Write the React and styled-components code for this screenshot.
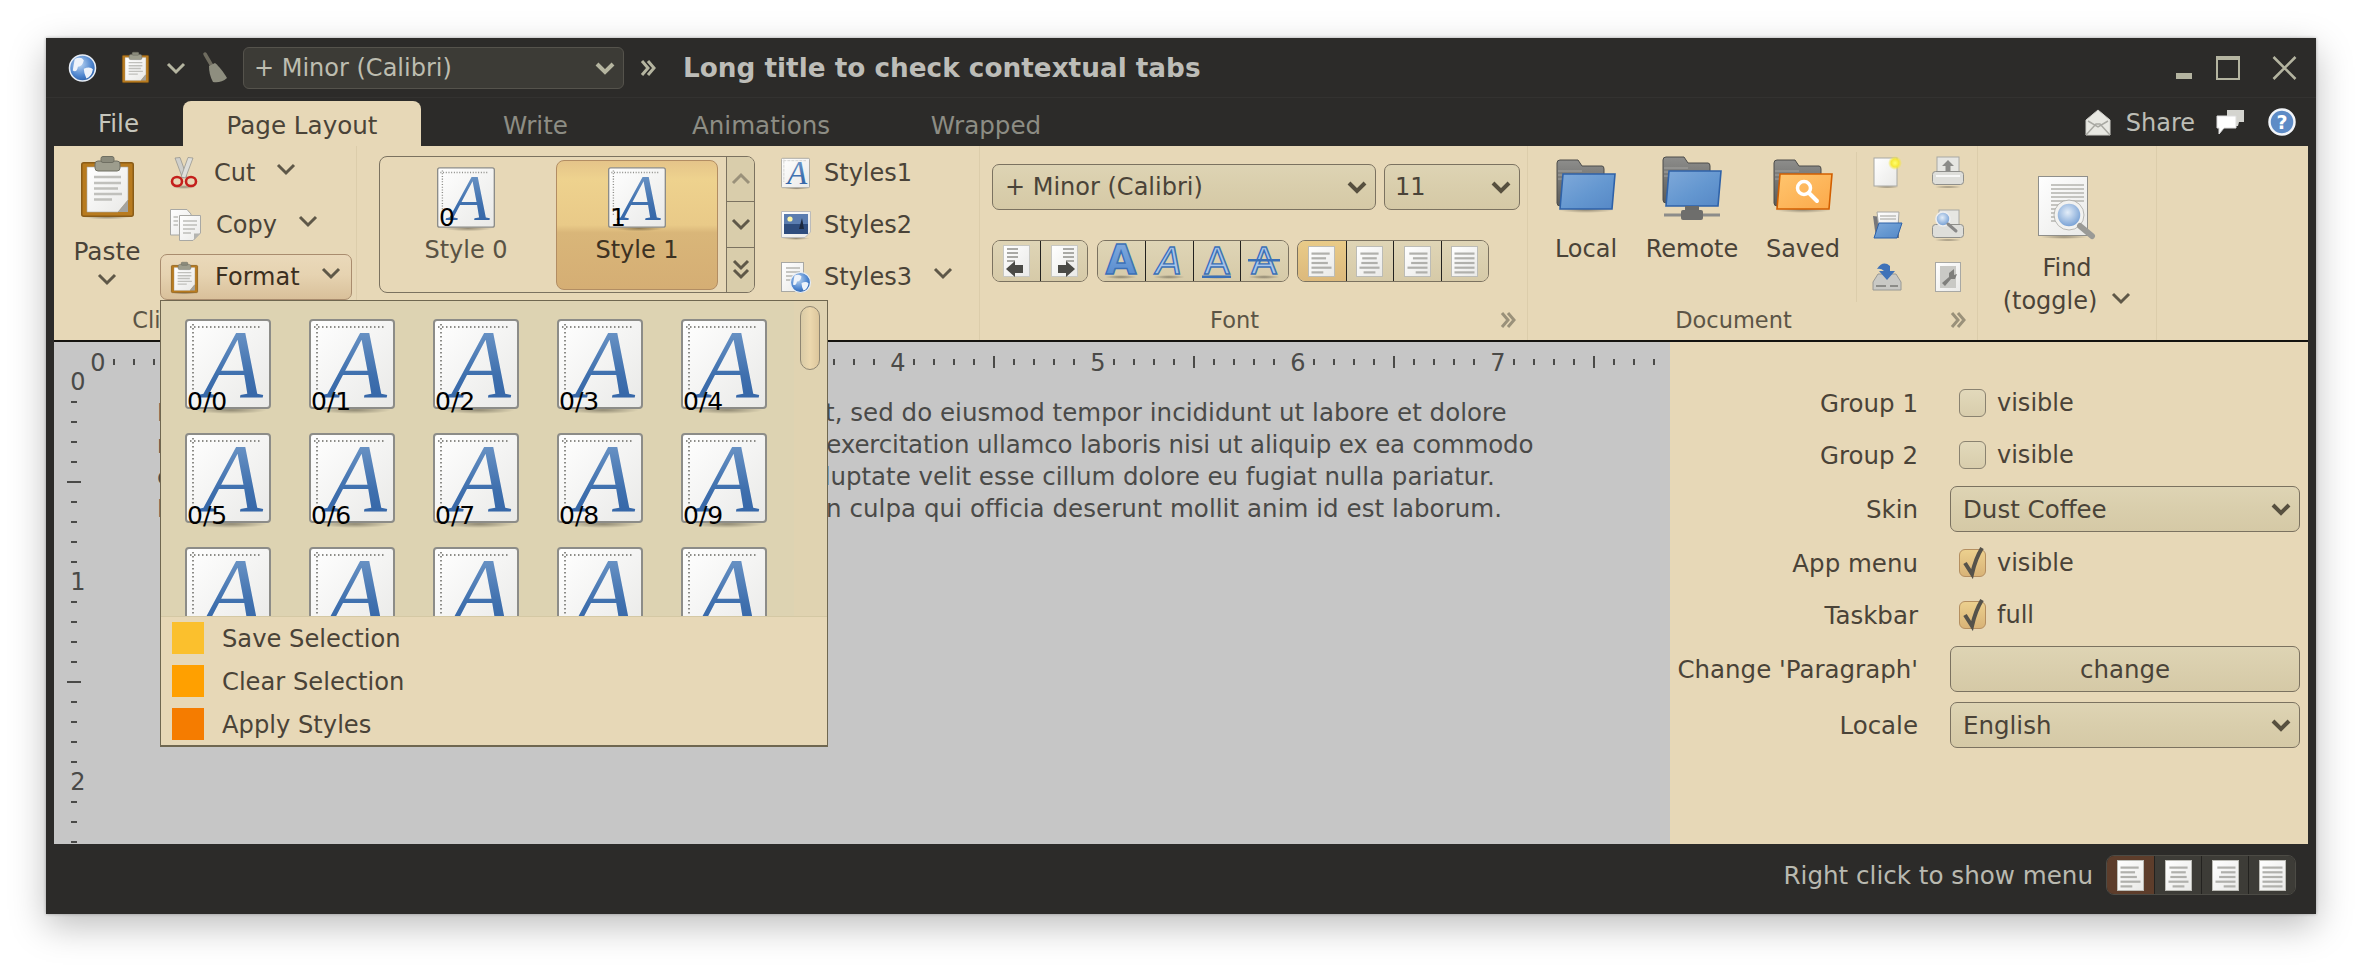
import React from 'react';
import styled, { createGlobalStyle } from 'styled-components';

const Global = createGlobalStyle`
  html { margin: 0; padding: 0; background: #fff; overflow: hidden; }
  body { margin: 0; padding: 0; min-height: 100vh; background: #fff; font-family: "DejaVu Sans", "Liberation Sans", sans-serif; font-size: 24px; color: #4a4338; }
  #root { padding-top: 38px; }
  * { box-sizing: border-box; }
`;

const Window = styled.div`
  position: relative; margin: 0 0 0 46px; width: 2270px; height: 876px;
  display: flex; flex-direction: column; background: #2c2b29;
  box-shadow: 0 12px 34px rgba(0,0,0,.26), 0 0 3px rgba(0,0,0,.3);
`;
const TitleBar = styled.div`
  height: 60px; display: flex; align-items: center; padding: 0 19px 0 22px;
  border-bottom: 1px solid #333230; flex: none;
`;
const DarkCombo = styled.div`
  width: 381px; height: 42px; margin-left: 15px; padding: 0 8px 0 10px;
  display: flex; align-items: center; justify-content: space-between;
  background: #3c3b36; border: 1px solid #55534c; border-radius: 6px; color: #bdbdb0;
`;
const Title = styled.div`
  margin-left: 27px; font-weight: bold; font-size: 26.3px; color: #bdbdb8; white-space: nowrap;
`;
const WinButtons = styled.div`
  margin-left: auto; display: flex; align-items: center;
`;
const Slot = styled.span`
  display: inline-flex; flex: none; margin-left: ${p => p.$ml || 0}px;
`;
const TabBar = styled.div`
  height: 48px; flex: none; display: flex; padding: 0 20px 0 8px; align-items: flex-end; font-size: 24.6px;
`;
const Tab = styled.div`
  width: ${p => p.$w}px; height: 45px; flex: none; display: flex; align-items: center; justify-content: center;
  padding-top: ${p => p.$pt || 0}px; white-space: nowrap;
  color: ${p => p.$active ? '#4a4338' : p.$bright ? '#c6c6bc' : '#8d8d84'};
  background: ${p => p.$active ? '#e7d8b7' : 'transparent'};
  border-radius: ${p => p.$active ? '8px 8px 0 0' : '0'};
`;
const ShareGroup = styled.div`
  margin-left: auto; height: 48px; display: flex; align-items: center; color: #bdbdb5; font-size: 24px;
`;
const ShareText = styled.span`
  margin: 2px 21px 0 15px;
`;
const Body = styled.div`
  flex: 1; min-height: 0; padding: 0 8px; display: flex; flex-direction: column;
`;
const Ribbon = styled.div`
  height: 196px; flex: none; display: flex; background: #e7d8b7; border-bottom: 2px solid #14130f;
`;
const Band = styled.div`
  width: ${p => p.$w}px; flex: none; display: flex; flex-direction: column; border-right: 1px solid #dccdab;
`;
const BandBody = styled.div`
  flex: 1; min-height: 0; display: flex; padding: ${p => p.$p || '0'};
`;
const BandTitle = styled.div`
  height: 38px; flex: none; display: flex; align-items: center; padding-bottom: 2px;
  font-size: 22.5px; color: #5c5546;
`;
const BandLabel = styled.div`
  flex: 1; text-align: center; white-space: nowrap;
`;
const Launcher = styled.div`
  width: 38px; flex: none; display: flex; justify-content: center;
`;
const PasteCol = styled.div`
  width: 106px; flex: none; padding-top: 6px; display: flex; flex-direction: column; align-items: center;
`;
const PasteLabel = styled.div`
  margin: 20px 0 6px; line-height: 30px; font-size: 24.8px;
`;
const RowCol = styled.div`
  display: flex; flex-direction: column; gap: 6px; margin-top: ${p => p.$mt || 0}px;
  margin-left: ${p => p.$ml || 0}px; width: ${p => p.$w || 192}px; flex: none;
`;
const RibbonRow = styled.div`
  height: 46px; display: flex; align-items: center; padding-left: ${p => p.$pl ?? 10}px; white-space: nowrap;
  border-radius: 7px; border: ${p => p.$hot ? '1px solid #a98c6e' : '0'};
  background: ${p => p.$hot ? 'linear-gradient(#ead9ba, #e6d3b1 45%, #d9c09a)' : 'transparent'};
  color: ${p => p.$hot ? '#3b2f20' : '#4a4338'};
`;
const IconSlot = styled.span`
  width: ${p => p.$w || 44}px; flex: none; display: inline-flex; align-items: center;
`;
const ChevSlot = styled.span`
  display: inline-flex; margin-left: ${p => p.$ml || 21}px; margin-top: ${p => p.$mt ?? -8}px;
`;
const Gallery = styled.div`
  width: 376px; height: 137px; flex: none; display: flex;
  border: 1px solid #7b7260; border-radius: 8px; overflow: hidden;
`;
const GalleryItems = styled.div`
  flex: 1; display: flex; gap: 9px; padding: 3px 8px 2px 5px;
`;
const GalleryItem = styled.div`
  width: 162px; flex: none; padding-top: 6px; display: flex; flex-direction: column; align-items: center;
  border-radius: 8px; border: 1px solid ${p => p.$on ? '#b28d63' : 'transparent'};
  background: ${p => p.$on ? 'linear-gradient(#e5c489, #eed28e 14%, #e9ca88 50%, #d9b679 56%, #d5ae74)' : 'transparent'};
  color: ${p => p.$on ? '#3d3222' : '#5a5344'};
`;
const GalleryLabel = styled.div`
  margin-top: 7px; line-height: 30px;
`;
const Scroller = styled.div`
  width: 29px; flex: none; display: flex; flex-direction: column; border-left: 1px solid #7b7260;
`;
const ScrollBtn = styled.div`
  flex: 1; display: flex; align-items: center; justify-content: center;
  background: #d9cdab; & + & { border-top: 1px solid #7b7260; }
`;
const FontBody = styled.div`
  padding: 18px 0 0 12px;
`;
const ComboRow = styled.div`
  display: flex; gap: 8px;
`;
const Combo = styled.div`
  width: ${p => p.$w ? p.$w + 'px' : '100%'}; height: 46px; flex: none;
  display: flex; align-items: center; justify-content: space-between; padding: 0 8px 0 ${p => p.$pl || 12}px;
  border: 1px solid #7b7260; border-radius: 7px; white-space: nowrap; color: #4a4338;
  background: linear-gradient(#ded4b4, #d9ceac 50%, #d5c9a6);
`;
const ButtonRow = styled.div`
  display: flex; gap: 8.5px; margin-top: 30px;
`;
const BtnGroup = styled.div`
  display: flex; height: ${p => p.$h || 42}px; border: 1px solid ${p => p.$dark ? '#4c4b45' : '#7b7260'};
  border-radius: 8px; overflow: hidden;
`;
const BtnCell = styled.div`
  width: ${p => p.$w || 47.5}px; flex: none; display: flex; align-items: center; justify-content: center;
  background: ${p => p.$dark
    ? (p.$on ? '#5d3d2b' : '#3d3c37')
    : (p.$on ? 'linear-gradient(#e9cb88, #dcb97c)' : 'linear-gradient(#dfd5b6, #d6caa8)')};
  & + & { border-left: 1px solid ${p => p.$dark ? '#23221f' : '#7b7260'}; }
`;
const DocLeft = styled.div`
  width: 329px; flex: none; height: 150px; margin-top: 6px; display: flex; padding: 0 0 0 8px; border-right: 1px solid #dccdab;
`;
const BigCell = styled.div`
  width: 100px; flex: none; margin-left: ${p => p.$ml || 0}px; padding-top: 4px;
  display: flex; flex-direction: column; align-items: center; color: #4a4338;
`;
const BigLabel = styled.div`
  margin-top: 14px; line-height: 30px; white-space: nowrap;
`;
const SmallGrid = styled.div`
  display: grid; grid-template-columns: 40px 40px; grid-auto-rows: 32px; column-gap: 21px; row-gap: 20.5px;
  padding: 10px 0 0 10px; justify-items: center; align-items: center;
`;
const FindCol = styled.div`
  flex: 1; padding-top: 30px; display: flex; flex-direction: column; align-items: center; color: #4a4338;
`;
const FindLine = styled.div`
  line-height: 33px; white-space: nowrap; display: flex; align-items: center; margin-top: ${p => p.$mt || 0}px;
`;
const Main = styled.div`
  flex: 1; min-height: 0; display: flex;
`;
const Canvas = styled.div`
  width: 1616px; flex: none; background: #c6c6c6; overflow: hidden; display: flex; flex-direction: column;
`;
const RulerSvg = styled.svg`
  display: block; flex: none;
`;
const CanvasRow = styled.div`
  flex: 1; min-height: 0; display: flex;
`;
const Paragraph = styled.div`
  margin-left: 53px; padding-top: 25px; font-size: 24.5px; line-height: 32px; color: #4a4a48; white-space: nowrap;
`;
const ParaLine = styled.div`
  letter-spacing: ${p => p.$ls}px;
`;
const Panel = styled.div`
  flex: 1; background: #e7d8b7; padding: 38px 7px 0 0; font-size: 24.5px;
`;
const FormRow = styled.div`
  height: 46px; display: flex; align-items: center; margin-top: ${p => p.$mt || 0}px;
`;
const FormLabel = styled.div`
  width: 248px; flex: none; text-align: right; white-space: nowrap; color: #4a4338;
`;
const Control = styled.div`
  margin-left: 32px; width: 350px; flex: none; display: flex; align-items: center;
`;
const Check = styled.div`
  width: 27px; height: 28px; margin-left: 9px; flex: none; position: relative; border-radius: 6px;
  border: 1px solid ${p => p.$on ? '#b58f60' : '#8a8270'};
  background: ${p => p.$on ? 'linear-gradient(#ecd08e, #d8b377)' : 'linear-gradient(#e2d9bb, #d8cdac)'};
`;
const CheckMark = styled.svg`
  position: absolute; left: 2px; top: -5px;
`;
const CheckText = styled.span`
  margin-left: 11px; font-size: 24px;
`;
const ChangeBtn = styled.div`
  width: 100%; height: 46px; border: 1px solid #7b7260; border-radius: 7px; display: flex; align-items: center; justify-content: center;
  background: linear-gradient(#ded4b4, #d5c9a6);
`;
const StatusBar = styled.div`
  height: 70px; flex: none; display: flex; justify-content: flex-end; align-items: center; padding: 0 20px 8px 0;
  color: #b9b9b0; font-size: 24.6px;
`;
const StatusText = styled.span`
  margin-right: 13px; white-space: nowrap;
`;
const Popup = styled.div`
  position: absolute; left: 114px; top: 262px; width: 668px; height: 447px; display: flex; flex-direction: column;
  background: #e7d8b7; border: 1px solid #6f6750; border-bottom-width: 2px; z-index: 5;
`;
const PopupGallery = styled.div`
  position: relative; height: 316px; flex: none; overflow: hidden; background: #ddd3b2; padding: 18px 0 0 24px;
  border-bottom: 1px solid #d4c8a4;
`;
const TileGrid = styled.div`
  display: grid; grid-template-columns: repeat(5, 86px); column-gap: 38px; row-gap: 24px; justify-content: start;
`;
const ScrollTrack = styled.div`
  position: absolute; right: 0; top: 0; bottom: 0; width: 33px; background: #e0d3b1;
`;
const ScrollThumb = styled.div`
  position: absolute; left: 6px; top: 5px; width: 20px; height: 64px; border-radius: 10px; border: 1px solid #8f8672;
  background: linear-gradient(90deg, #d9cba6, #ecd8ae 50%, #dcc69c);
`;
const MenuRow = styled.div`
  height: ${p => p.$h}px; flex: none; display: flex; align-items: center;
`;
const Swatch = styled.div`
  width: 32px; height: 32px; margin-left: 11px; flex: none; background: ${p => p.$c};
`;
const MenuText = styled.span`
  margin: 2px 0 0 18px; font-size: 24.2px; color: #4a4338;
`;
const Tile = styled.div`
  position: relative; width: ${p => p.$w}px; height: ${p => p.$h}px; flex: none;
`;
const TileSvg = styled.svg`
  display: block; overflow: visible;
`;
const TileLabel = styled.span`
  position: absolute; left: 2px; top: ${p => p.$top}px; line-height: 30px; font-size: 25px; color: #000; white-space: nowrap;
`;
const Icon = styled.svg`
  display: block; overflow: visible; flex: none;
`;
const Defs = styled.svg`
  position: absolute; width: 0; height: 0;
`;

const Chev = ({ c = '#5f5848', w = 20, h = 12, sw = 3 }) => (
  <Icon width={w} height={h} viewBox="0 0 20 12"><path d="M2 2 L10 10 L18 2" fill="none" stroke={c} strokeWidth={sw} /></Icon>
);
const ChevUp = ({ c = '#9a917a' }) => (
  <Icon width={20} height={12} viewBox="0 0 20 12"><path d="M2 10 L10 2 L18 10" fill="none" stroke={c} strokeWidth={3} /></Icon>
);
const ChevDouble = () => (
  <Icon width={18} height={22} viewBox="0 0 18 22"><path d="M2 2 L9 9 L16 2 M2 11 L9 18 L16 11" fill="none" stroke="#5f5848" strokeWidth={3} /></Icon>
);
const DoubleRight = ({ c = '#9a917a', w = 16, h = 18 }) => (
  <Icon width={w} height={h} viewBox="0 0 16 18"><path d="M2 2 L8 9 L2 16 M8 2 L14 9 L8 16" fill="none" stroke={c} strokeWidth={3} /></Icon>
);

const AllDefs = () => (
  <Defs aria-hidden="true">
    <defs>
      <linearGradient id="paper" x1="0" y1="0" x2="1" y2="1"><stop offset="0" stopColor="#fff" /><stop offset="1" stopColor="#e9e9e7" /></linearGradient>
      <linearGradient id="blueA" x1="0" y1="0" x2="0" y2="1"><stop offset="0" stopColor="#7da3cf" /><stop offset=".6" stopColor="#3f70ae" /><stop offset="1" stopColor="#2e5fa3" /></linearGradient>
      <linearGradient id="boldA" x1="0" y1="0" x2="0" y2="1"><stop offset="0" stopColor="#86aee0" /><stop offset="1" stopColor="#4f86cc" /></linearGradient>
      <linearGradient id="folderBlue" x1="0" y1="0" x2="1" y2="1"><stop offset="0" stopColor="#7fa9da" /><stop offset=".55" stopColor="#6497d0" /><stop offset="1" stopColor="#5688c6" /></linearGradient>
      <linearGradient id="folderBack" x1="0" y1="0" x2="0" y2="1"><stop offset="0" stopColor="#8d8d8b" /><stop offset="1" stopColor="#5a5a58" /></linearGradient>
      <linearGradient id="orangeF" x1="0" y1="0" x2="1" y2="1"><stop offset="0" stopColor="#ffc56e" /><stop offset="1" stopColor="#fba94a" /></linearGradient>
      <radialGradient id="globe" cx=".4" cy=".35" r=".75"><stop offset="0" stopColor="#bcd6f2" /><stop offset=".6" stopColor="#4f86cf" /><stop offset="1" stopColor="#22569f" /></radialGradient>
      <radialGradient id="glow" cx=".5" cy=".5" r=".5"><stop offset="0" stopColor="#ffff70" /><stop offset=".55" stopColor="#f6e83a" /><stop offset="1" stopColor="#f6e83a" stopOpacity="0" /></radialGradient>
      <radialGradient id="lens" cx=".45" cy=".4" r=".6"><stop offset="0" stopColor="#e3edf8" /><stop offset="1" stopColor="#6f9bd2" /></radialGradient>
      <radialGradient id="shadow" cx=".5" cy=".5" r=".5"><stop offset="0" stopColor="#000" stopOpacity=".35" /><stop offset="1" stopColor="#000" stopOpacity="0" /></radialGradient>
    </defs>
  </Defs>
);

const GlobeMark = ({ cx, cy, r }) => (
  <g>
    <circle cx={cx} cy={cy} r={r} fill="url(#globe)" stroke="#e8eef6" strokeWidth={r * 0.12} />
    <path d={`M${cx - r * .6} ${cy - r * .7} q${r * .5} -${r * .2} ${r * .7} ${r * .1} q-${r * .1} ${r * .5} -${r * .45} ${r * .5} q-${r * .1} ${r * .5} -${r * .4} ${r * .3} z`} fill="#eef3fa" />
    <path d={`M${cx + r * .1} ${cy + r * .05} q${r * .5} -${r * .2} ${r * .7} ${r * .05} q-${r * .1} ${r * .6} -${r * .5} ${r * .7} q-${r * .2} -${r * .4} -${r * .2} -${r * .75} z`} fill="#eef3fa" />
  </g>
);
const Globe = () => (
  <Icon width={29} height={28} viewBox="0 0 29 28"><GlobeMark cx={14.5} cy={14} r={13} /></Icon>
);
const Broom = () => (
  <Icon width={25} height={30} viewBox="0 0 25 30">
    <path d="M2 1 L9 13" stroke="#6f6c5f" strokeWidth={3.5} strokeLinecap="round" />
    <path d="M6 13 L12 10 C16 13 21 20 24 25 C20 29 14 30 10 29 C7 24 6 18 6 13 Z" fill="#8e8e7f" />
  </Icon>
);
const Clipboard = ({ w = 53, h = 61 }) => (
  <Icon width={w} height={h} viewBox="0 0 53 61">
    <ellipse cx="26" cy="61" rx="24" ry="2.5" fill="url(#shadow)" />
    <rect x=".75" y="6.75" width="51.5" height="53.5" rx="2" fill="#b87b1f" stroke="#8a5c17" strokeWidth="1.5" />
    <path d="M6 11 H47 V44 L37 56 H6 Z" fill="url(#paper)" stroke="#a9a9a5" strokeWidth=".6" />
    <path d="M37 56 L47 44 L47 56 Z" fill="#a3a39f" />
    <g stroke="#c0c0bc" strokeWidth="2.6">
      <path d="M13 21 H40 M13 27 H40 M13 32.500 H37 M13 38 H41 M13 43.500 H31" />
    </g>
    <rect x="14" y="5" width="25" height="10" rx="3" fill="#9d9d8d" stroke="#6f6f62" strokeWidth="1" />
    <rect x="20" y=".5" width="13" height="6" rx="2" fill="#8b8b7c" stroke="#6f6f62" strokeWidth="1" />
  </Icon>
);
const Scissors = () => (
  <Icon width={28} height={32} viewBox="0 0 28 32">
    <ellipse cx="14" cy="30" rx="12" ry="2" fill="url(#shadow)" />
    <path d="M5 1 L10 0.500 L17 20 L12.500 21 Z" fill="#cfcfcb" stroke="#8e8e8a" strokeWidth=".7" />
    <path d="M23 1 L18 0.500 L11 20 L15.500 21 Z" fill="#dedeDA" stroke="#8e8e8a" strokeWidth=".7" />
    <ellipse cx="7" cy="24.500" rx="5" ry="4.500" fill="none" stroke="#c4201c" strokeWidth="2.6" />
    <ellipse cx="21" cy="24.500" rx="5" ry="4.500" fill="none" stroke="#c4201c" strokeWidth="2.6" />
  </Icon>
);
const CopyIcon = () => (
  <Icon width={31} height={32} viewBox="0 0 31 32">
    <path d="M.5 .5 H17 L21 5 V26 H.5 Z" fill="url(#paper)" stroke="#a8a8a4" />
    <path d="M9.500 6.500 H30.500 V24 L23 31.500 H9.500 Z" fill="url(#paper)" stroke="#a8a8a4" />
    <path d="M24 31 L30 24.500 L24 24.500 Z" fill="#b4b4b0" />
    <path d="M13 12 H27 M13 16 H27 M13 20 H25 M13 24 H21 M3.500 8 H8 M3.500 12 H8 M3.500 16 H8" stroke="#bdbdb9" strokeWidth="1.6" />
  </Icon>
);
const PageMark = ({ x = 0, y = 0, w = 27, h = 31 }) => (
  <rect x={x + .5} y={y + .5} width={w - 1} height={h - 1} fill="url(#paper)" stroke="#bcbcb6" />
);
const StyleA = ({ w = 86, h = 90 }) => (
  <TileSvg width={w} height={h} viewBox="0 0 86 90">
    <ellipse cx="46" cy="91" rx="36" ry="4" fill="url(#shadow)" />
    <rect x="1" y="1" width="84" height="88" rx="3" fill="url(#paper)" stroke="#8c8c88" strokeWidth="2" />
    <path d="M5 8 H76" stroke="#8c8c88" strokeWidth="2" strokeDasharray="1.5 2.5" />
    <path d="M8 5 V72" stroke="#8c8c88" strokeWidth="2" strokeDasharray="1.5 2.5" />
    <text x="18" y="78" fontFamily="'Liberation Serif', serif" fontStyle="italic" fontSize="98" fill="url(#blueA)">A</text>
  </TileSvg>
);
const StyleTile = ({ label, w = 86, h = 90, top = 68 }) => (
  <Tile $w={w} $h={h}>
    <StyleA w={w} h={h} />
    {label !== undefined && <TileLabel $top={top}>{label}</TileLabel>}
  </Tile>
);
const ImageDoc = () => (
  <Icon width={30} height={28} viewBox="0 0 30 28">
    <ellipse cx="15" cy="27.500" rx="14" ry="1.500" fill="url(#shadow)" />
    <path d="M.5 .5 H29.500 V21 L24 26.500 H.5 Z" fill="url(#paper)" stroke="#bbb" />
    <rect x="3" y="3" width="24" height="20" fill="#2f4d7e" />
    <rect x="3" y="3" width="24" height="10" fill="#5b7db0" />
    <circle cx="9" cy="8" r="2.600" fill="#fff7a8" />
    <path d="M18 18 L21 7 L23 18 Z" fill="#1d2a3f" />
  </Icon>
);
const GlobeDoc = () => (
  <Icon width={30} height={31} viewBox="0 0 30 31">
    <rect x=".5" y=".5" width="22" height="29" fill="url(#paper)" stroke="#a8a8a4" />
    <path d="M5 6 H19 M5 10 H19 M5 14 H19 M5 18 H14" stroke="#c6c6c2" strokeWidth="2" />
    <GlobeMark cx={19.500} cy={20.500} r={10} />
  </Icon>
);
const FolderBase = ({ y = 0, front = 'url(#folderBlue)', stroke = '#2f62a8' }) => (
  <g transform={`translate(0 ${y})`}>
    <path d="M1 4 Q1 1 4 1 H22 L26 7 H46 Q48 7 48 10 V47 H4 Q1 47 1 44 Z" fill="url(#folderBack)" stroke="#4c4c4a" />
    <path d="M2 12 H26 M2 16 H26 M2 20 H26" stroke="#a3a3a1" strokeWidth="1" />
    <path d="M7 15 H59 L56 50 H4 Z" fill={front} stroke={stroke} strokeWidth="1.600" />
  </g>
);
const FolderLocal = () => (
  <Icon width={60} height={64} viewBox="0 0 60 64">
    <ellipse cx="30" cy="54" rx="28" ry="3" fill="url(#shadow)" />
    <FolderBase y={3} />
  </Icon>
);
const FolderRemote = () => (
  <Icon width={60} height={64} viewBox="0 0 60 64">
    <FolderBase y={0} />
    <rect x="23" y="50" width="14" height="5" fill="#6a6a68" />
    <path d="M2 59 H58" stroke="#8c8c8a" strokeWidth="3" />
    <rect x="19" y="54" width="22" height="10" rx="2" fill="#6e6e6c" />
  </Icon>
);
const FolderSaved = () => (
  <Icon width={60} height={64} viewBox="0 0 60 64">
    <ellipse cx="30" cy="54" rx="28" ry="3" fill="url(#shadow)" />
    <FolderBase y={3} front="url(#orangeF)" stroke="#d25f00" />
    <circle cx="31" cy="32" r="6.500" fill="none" stroke="#fff" strokeWidth="3.500" />
    <path d="M36 37 L44 45" stroke="#fff" strokeWidth="4" strokeLinecap="round" />
  </Icon>
);
const NewDoc = () => (
  <Icon width={30} height={32} viewBox="0 0 30 32">
    <ellipse cx="15" cy="31" rx="12" ry="1.500" fill="url(#shadow)" />
    <rect x="2" y="2" width="23" height="28" fill="url(#paper)" stroke="#a8a8a4" />
    <circle cx="23" cy="7" r="7" fill="url(#glow)" />
  </Icon>
);
const PrinterUp = () => (
  <Icon width={32} height={32} viewBox="0 0 32 32">
    <ellipse cx="16" cy="31" rx="14" ry="1.500" fill="url(#shadow)" />
    <rect x="5" y="1" width="22" height="17" fill="#e6e6e2" stroke="#a8a8a4" />
    <path d="M16 4 L22 10 H18.500 V15 H13.500 V10 H10 Z" fill="#8b8b88" />
    <rect x=".5" y="15.500" width="31" height="13" rx="3" fill="#dededa" stroke="#8f8f8b" />
    <path d="M4 20 H28" stroke="#fff" strokeWidth="1.500" />
  </Icon>
);
const OpenFolder = () => (
  <Icon width={32} height={28} viewBox="0 0 32 28">
    <path d="M2 5 L5 27 H28 V8 Z" fill="#77777a" />
    <path d="M6 1 L28 1 L27 16 L8 18 Z" fill="url(#paper)" stroke="#a8a8a4" />
    <path d="M9 5 H25 M9 8 H25" stroke="#bdbdb9" strokeWidth="1.500" />
    <path d="M8 12 L31 12 L26 27 H3 Z" fill="url(#folderBlue)" stroke="#2f62a8" />
  </Icon>
);
const PrintPreview = () => (
  <Icon width={32} height={32} viewBox="0 0 32 32">
    <ellipse cx="16" cy="31" rx="14" ry="1.500" fill="url(#shadow)" />
    <rect x="7" y="1" width="20" height="17" fill="#e6e6e2" stroke="#a8a8a4" />
    <rect x=".5" y="15.500" width="31" height="13" rx="3" fill="#dededa" stroke="#8f8f8b" />
    <circle cx="11" cy="10" r="7" fill="url(#lens)" stroke="#eee" strokeWidth="1.600" />
    <path d="M16 15 L24 22" stroke="#888" strokeWidth="3" strokeLinecap="round" />
  </Icon>
);
const SaveDisk = () => (
  <Icon width={30} height={30} viewBox="0 0 30 30">
    <path d="M6 12 H24 L29 20 V28 H1 V20 Z" fill="#c9c9c5" stroke="#989894" />
    <path d="M4 24 H14 M18 24 H26" stroke="#8c8c88" strokeWidth="2" />
    <path d="M5 7 Q11 -2 18 4 L18 9 L23 9 L15 18 L7 9 L12 9 Q9 6 5 7 Z" fill="#3f72b8" />
  </Icon>
);
const WrenchDoc = () => (
  <Icon width={27} height={31} viewBox="0 0 27 31">
    <rect x=".5" y=".5" width="25" height="29" fill="url(#paper)" stroke="#a8a8a4" />
    <path d="M5 4 H21 V26 H5 Z" fill="#c9c9c5" />
    <path d="M19 7 L14 11 L14 15 L7 21 L10 24 L16 17 L20 17 L22 12 L19 13 Z" fill="#7f7f7c" />
  </Icon>
);
const FindIcon = () => (
  <Icon width={58} height={62} viewBox="0 0 58 62">
    <ellipse cx="26" cy="61" rx="24" ry="2" fill="url(#shadow)" />
    <rect x=".5" y=".5" width="49" height="59" fill="url(#paper)" stroke="#8f8f8b" />
    <path d="M13 9 H46 M13 13 H46 M13 17 H46 M13 21 H46 M13 25 H46 M13 29 H30 M13 33 H24 M13 37 H24 M13 41 H24 M13 45 H26" stroke="#c4c4c0" strokeWidth="1.800" />
    <circle cx="31" cy="39" r="13" fill="url(#lens)" stroke="#f2f2f0" strokeWidth="3.500" />
    <circle cx="31" cy="39" r="15" fill="none" stroke="#a9a9a5" strokeWidth=".8" />
    <path d="M42 50 L54 60" stroke="#9a9a96" strokeWidth="6" strokeLinecap="round" />
  </Icon>
);
const Envelope = () => (
  <Icon width={26} height={27} viewBox="0 0 26 27">
    <path d="M1 11 L13 1 L25 11 V26 H1 Z" fill="#e8e8e2" stroke="#cfcfc9" />
    <path d="M1 26 L11 15 H15 L25 26 M3 12 L13 18 L23 12" fill="none" stroke="#a9a9a3" strokeWidth="1.500" />
  </Icon>
);
const Comments = () => (
  <Icon width={29} height={26} viewBox="0 0 29 26">
    <path d="M11 1 H28 V13 H23 L22 17 H11 Z" fill="#d4d4cf" />
    <path d="M1 7 H20 V19 H8 L3 25 V19 H1 Z" fill="#fff" stroke="#ddd" />
  </Icon>
);
const Help = () => (
  <Icon width={28} height={28} viewBox="0 0 28 28">
    <circle cx="14" cy="14" r="12.500" fill="#5d8bc6" stroke="#f2f5f9" strokeWidth="2.500" />
    <text x="14" y="21" textAnchor="middle" fontFamily="'DejaVu Sans', sans-serif" fontWeight="bold" fontSize="19" fill="#fff">?</text>
  </Icon>
);
const AlignPage = ({ mode }) => {
  const rows = [20, 16, 18, 22, 13];
  const fullW = 20;
  return (
    <Icon width={27} height={31} viewBox="0 0 27 31">
      <PageMark />
      {rows.map((r, i) => {
        const len = mode === 'justify' ? fullW : r * (fullW / 22);
        const x = mode === 'left' || mode === 'justify' ? 3.500 : mode === 'center' ? (27 - len) / 2 : 23.500 - len;
        return <rect key={i} x={x} y={6.500 + i * 4.700} width={len} height="2.200" fill="#b0b0ac" />;
      })}
    </Icon>
  );
};
const IndentPage = ({ right }) => (
  <Icon width={27} height={32} viewBox="0 0 27 32">
    <rect x=".5" y=".5" width="26" height="31" fill="url(#paper)" stroke="#c8c8c2" />
    <g transform={right ? 'matrix(-1 0 0 1 27 0)' : undefined}>
      <path d="M4 4 H15 M4 8 H15 M4 12 H15 M4 16 H12" stroke="#a9a9a5" strokeWidth="2" />
      <path d="M3 24 L12 16 V20 H20 V28 H12 V32 Z" fill="#4a4a46" />
    </g>
  </Icon>
);
const FontA = ({ kind }) => (
  <Icon width={36} height={36} viewBox="0 0 36 36">
    <ellipse cx="18" cy="34" rx="16" ry="2" fill="url(#shadow)" />
    <text x="18" y="31" textAnchor="middle" fontFamily="'DejaVu Sans', sans-serif"
      fontWeight={kind === 'bold' ? 'bold' : 'normal'} fontStyle={kind === 'italic' ? 'italic' : 'normal'}
      fontSize={kind === 'bold' ? 40 : 38} fill={kind === 'bold' ? 'url(#boldA)' : '#a9c6ea'} stroke="#3b70b6" strokeWidth="1.400">A</text>
    {kind === 'underline' && <rect x="3" y="32.500" width="29" height="2.500" fill="#3b70b6" />}
    {kind === 'strike' && <rect x="2" y="16" width="32" height="2.500" fill="#3b70b6" />}
  </Icon>
);
const WinMin = () => (
  <Icon width={16} height={24} viewBox="0 0 16 24"><rect x="0" y="17" width="16" height="6" fill="#b4b4a0" /></Icon>
);
const WinMax = () => (
  <Icon width={24} height={24} viewBox="0 0 24 24"><path d="M1 2.500 H23 M1 1 V23 H23 V1" fill="none" stroke="#b4b4a0" strokeWidth="2" /><rect x="0" y="0" width="24" height="4" fill="#b4b4a0" /></Icon>
);
const WinClose = () => (
  <Icon width={25} height={24} viewBox="0 0 25 24"><path d="M1.500 1 L23.500 23 M23.500 1 L1.500 23" stroke="#b4b4a0" strokeWidth="2.600" /></Icon>
);

const HRuler = () => {
  const ticks = [];
  for (let i = 1; i <= 78; i++) {
    if (i % 10 === 0) continue;
    const x = 40 + 20 * i;
    const long = i % 5 === 0;
    ticks.push(<rect key={i} x={x - 1} y={long ? 14 : 17} width="2" height={long ? 12 : 6} fill="#4a4a48" />);
  }
  return (
    <RulerSvg width="1616" height="30" viewBox="0 0 1616 30">
      {ticks}
      {[0, 1, 2, 3, 4, 5, 6, 7].map(n => (
        <text key={n} x={44 + 200 * n} y="29" textAnchor="middle" fontFamily="'DejaVu Sans', sans-serif" fontSize="24" fill="#4a4a48">{n}</text>
      ))}
    </RulerSvg>
  );
};
const VRuler = () => {
  const ticks = [];
  for (let i = 1; i <= 23; i++) {
    if (i % 10 === 0) continue;
    const y = 10 + 20 * i;
    const long = i % 5 === 0;
    ticks.push(<rect key={i} x={long ? 13 : 17} y={y - 1} width={long ? 14 : 6} height="2" fill="#4a4a48" />);
  }
  return (
    <RulerSvg width="50" height="472" viewBox="0 0 50 472">
      {ticks}
      {[0, 1, 2].map(n => (
        <text key={n} x="24" y={18 + 200 * n} textAnchor="middle" fontFamily="'DejaVu Sans', sans-serif" fontSize="24" fill="#4a4a48">{n}</text>
      ))}
    </RulerSvg>
  );
};

const para = [
  ['Lorem ipsum dolor sit amet, consectetur adipiscing elit, sed do eiusmod tempor incididunt ut labore et dolore', 0.03],
  ['magna aliqua. Ut enim ad minim veniam, quis nostrud exercitation ullamco laboris nisi ut aliquip ex ea commodo', -0.15],
  ['consequat. Duis aute irure dolor in reprehenderit in voluptate velit esse cillum dolore eu fugiat nulla pariatur.', -0.03],
  ['Excepteur sint occaecat cupidatat non proident, sunt in culpa qui officia deserunt mollit anim id est laborum.', 0.055],
];

export default function App() {
  const tiles = [];
  for (let i = 0; i < 15; i++) tiles.push(`0/${i}`);
  const alignCells = (dark) => ['left', 'center', 'right', 'justify'].map((m, i) => (
    <BtnCell key={m} $on={i === 0} $dark={dark} $w={dark ? 47 : 47.500}><AlignPage mode={m} /></BtnCell>
  ));
  return (
    <>
      <Global />
      <AllDefs />
      <Window>
        <TitleBar>
          <Globe />
          <Slot $ml={25}><Clipboard w={27} h={31} /></Slot>
          <Slot $ml={17}><Chev c="#b5b5a0" /></Slot>
          <Slot $ml={17}><Broom /></Slot>
          <DarkCombo>+ Minor (Calibri)<Chev c="#b5b5a0" sw={4} /></DarkCombo>
          <Slot $ml={16}><DoubleRight c="#b5b5a0" /></Slot>
          <Title>Long title to check contextual tabs</Title>
          <WinButtons><WinMin /><Slot $ml={24}><WinMax /></Slot><Slot $ml={32}><WinClose /></Slot></WinButtons>
        </TitleBar>
        <TabBar>
          <Tab $w={129} $bright>File</Tab>
          <Tab $w={238} $active $pt={3}>Page Layout</Tab>
          <Tab $w={229} $pt={4}>Write</Tab>
          <Tab $w={222} $pt={4}>Animations</Tab>
          <Tab $w={228} $pt={4}>Wrapped</Tab>
          <ShareGroup>
            <Envelope />
            <ShareText>Share</ShareText>
            <Comments />
            <Slot $ml={23}><Help /></Slot>
          </ShareGroup>
        </TabBar>
        <Body>
          <Ribbon>
            <Band $w={303}>
              <BandBody $p="4px 0 0 0">
                <PasteCol>
                  <Clipboard />
                  <PasteLabel>Paste</PasteLabel>
                  <Chev />
                </PasteCol>
                <RowCol>
                  <RibbonRow><IconSlot><Scissors /></IconSlot>Cut<ChevSlot><Chev /></ChevSlot></RibbonRow>
                  <RibbonRow><IconSlot $w={46}><CopyIcon /></IconSlot>Copy<ChevSlot><Chev /></ChevSlot></RibbonRow>
                  <RibbonRow $hot><IconSlot><Clipboard w={27} h={31} /></IconSlot>Format<ChevSlot><Chev /></ChevSlot></RibbonRow>
                </RowCol>
              </BandBody>
              <BandTitle><BandLabel>Clipboard</BandLabel><Launcher /></BandTitle>
            </Band>
            <Band $w={623}>
              <BandBody $p="10px 0 0 22px">
                <Gallery>
                  <GalleryItems>
                    <GalleryItem><StyleTile label="0" w={58} h={61} top={36} /><GalleryLabel>Style 0</GalleryLabel></GalleryItem>
                    <GalleryItem $on><StyleTile label="1" w={58} h={61} top={36} /><GalleryLabel>Style 1</GalleryLabel></GalleryItem>
                  </GalleryItems>
                  <Scroller>
                    <ScrollBtn><ChevUp /></ScrollBtn>
                    <ScrollBtn><Chev /></ScrollBtn>
                    <ScrollBtn><ChevDouble /></ScrollBtn>
                  </Scroller>
                </Gallery>
                <RowCol $mt={-6} $ml={26} $w={190}>
                  <RibbonRow $pl={0}><IconSlot $w={43}><StyleTile w={29} h={30} /></IconSlot>Styles1</RibbonRow>
                  <RibbonRow $pl={0}><IconSlot $w={43}><ImageDoc /></IconSlot>Styles2</RibbonRow>
                  <RibbonRow $pl={0}><IconSlot $w={43}><GlobeDoc /></IconSlot>Styles3<ChevSlot><Chev /></ChevSlot></RibbonRow>
                </RowCol>
              </BandBody>
              <BandTitle><BandLabel>Quick Styles</BandLabel></BandTitle>
            </Band>
            <Band $w={548}>
              <BandBody>
                <FontBody>
                  <ComboRow>
                    <Combo $w={384}>+ Minor (Calibri)<Chev sw={4} c="#57503f" /></Combo>
                    <Combo $w={136} $pl={10}>11<Chev sw={4} c="#57503f" /></Combo>
                  </ComboRow>
                  <ButtonRow>
                    <BtnGroup>
                      <BtnCell $w={47}><IndentPage /></BtnCell>
                      <BtnCell $w={47}><IndentPage right /></BtnCell>
                    </BtnGroup>
                    <BtnGroup>
                      {['bold', 'italic', 'underline', 'strike'].map(k => <BtnCell key={k}><FontA kind={k} /></BtnCell>)}
                    </BtnGroup>
                    <BtnGroup>{alignCells(false)}</BtnGroup>
                  </ButtonRow>
                </FontBody>
              </BandBody>
              <BandTitle><BandLabel>Font</BandLabel><Launcher><DoubleRight /></Launcher></BandTitle>
            </Band>
            <Band $w={450}>
              <BandBody>
                <DocLeft>
                  <BigCell><FolderLocal /><BigLabel>Local</BigLabel></BigCell>
                  <BigCell $ml={6}><FolderRemote /><BigLabel>Remote</BigLabel></BigCell>
                  <BigCell $ml={11}><FolderSaved /><BigLabel>Saved</BigLabel></BigCell>
                </DocLeft>
                <SmallGrid>
                  <NewDoc /><PrinterUp />
                  <OpenFolder /><PrintPreview />
                  <SaveDisk /><WrenchDoc />
                </SmallGrid>
              </BandBody>
              <BandTitle><BandLabel>Document</BandLabel><Launcher><DoubleRight /></Launcher></BandTitle>
            </Band>
            <Band $w={179}>
              <FindCol>
                <FindIcon />
                <FindLine $mt={14}>Find</FindLine>
                <FindLine>(toggle)<ChevSlot $ml={14}><Chev /></ChevSlot></FindLine>
              </FindCol>
            </Band>
          </Ribbon>
          <Main>
            <Canvas>
              <HRuler />
              <CanvasRow>
                <VRuler />
                <Paragraph>{para.map(([l, ls]) => <ParaLine key={l} $ls={ls}>{l}</ParaLine>)}</Paragraph>
              </CanvasRow>
            </Canvas>
            <Panel>
              <FormRow><FormLabel>Group 1</FormLabel><Control><Check /><CheckText>visible</CheckText></Control></FormRow>
              <FormRow $mt={6}><FormLabel>Group 2</FormLabel><Control><Check /><CheckText>visible</CheckText></Control></FormRow>
              <FormRow $mt={8}><FormLabel>Skin</FormLabel><Control><Combo>Dust Coffee<Chev sw={4} c="#57503f" /></Combo></Control></FormRow>
              <FormRow $mt={8}><FormLabel>App menu</FormLabel><Control>
                <Check $on><CheckMark width="24" height="34" viewBox="0 0 24 34"><path d="M3 18 L10 29 C12 20 15 11 20 3" fill="none" stroke="#55524a" strokeWidth="4" /></CheckMark></Check>
                <CheckText>visible</CheckText></Control></FormRow>
              <FormRow $mt={6}><FormLabel>Taskbar</FormLabel><Control>
                <Check $on><CheckMark width="24" height="34" viewBox="0 0 24 34"><path d="M3 18 L10 29 C12 20 15 11 20 3" fill="none" stroke="#55524a" strokeWidth="4" /></CheckMark></Check>
                <CheckText>full</CheckText></Control></FormRow>
              <FormRow $mt={8}><FormLabel>Change 'Paragraph'</FormLabel><Control><ChangeBtn>change</ChangeBtn></Control></FormRow>
              <FormRow $mt={10}><FormLabel>Locale</FormLabel><Control><Combo>English<Chev sw={4} c="#57503f" /></Combo></Control></FormRow>
            </Panel>
          </Main>
        </Body>
        <StatusBar>
          <StatusText>Right click to show menu</StatusText>
          <BtnGroup $h={40} $dark>{alignCells(true)}</BtnGroup>
        </StatusBar>
        <Popup>
          <PopupGallery>
            <TileGrid>
              {tiles.map((t, i) => <StyleTile key={t} label={i < 10 ? t : undefined} />)}
            </TileGrid>
            <ScrollTrack><ScrollThumb /></ScrollTrack>
          </PopupGallery>
          <MenuRow $h={42}><Swatch $c="#fbc02d" /><MenuText>Save Selection</MenuText></MenuRow>
          <MenuRow $h={43}><Swatch $c="#ffa000" /><MenuText>Clear Selection</MenuText></MenuRow>
          <MenuRow $h={43}><Swatch $c="#f57c00" /><MenuText>Apply Styles</MenuText></MenuRow>
        </Popup>
      </Window>
    </>
  );
}
